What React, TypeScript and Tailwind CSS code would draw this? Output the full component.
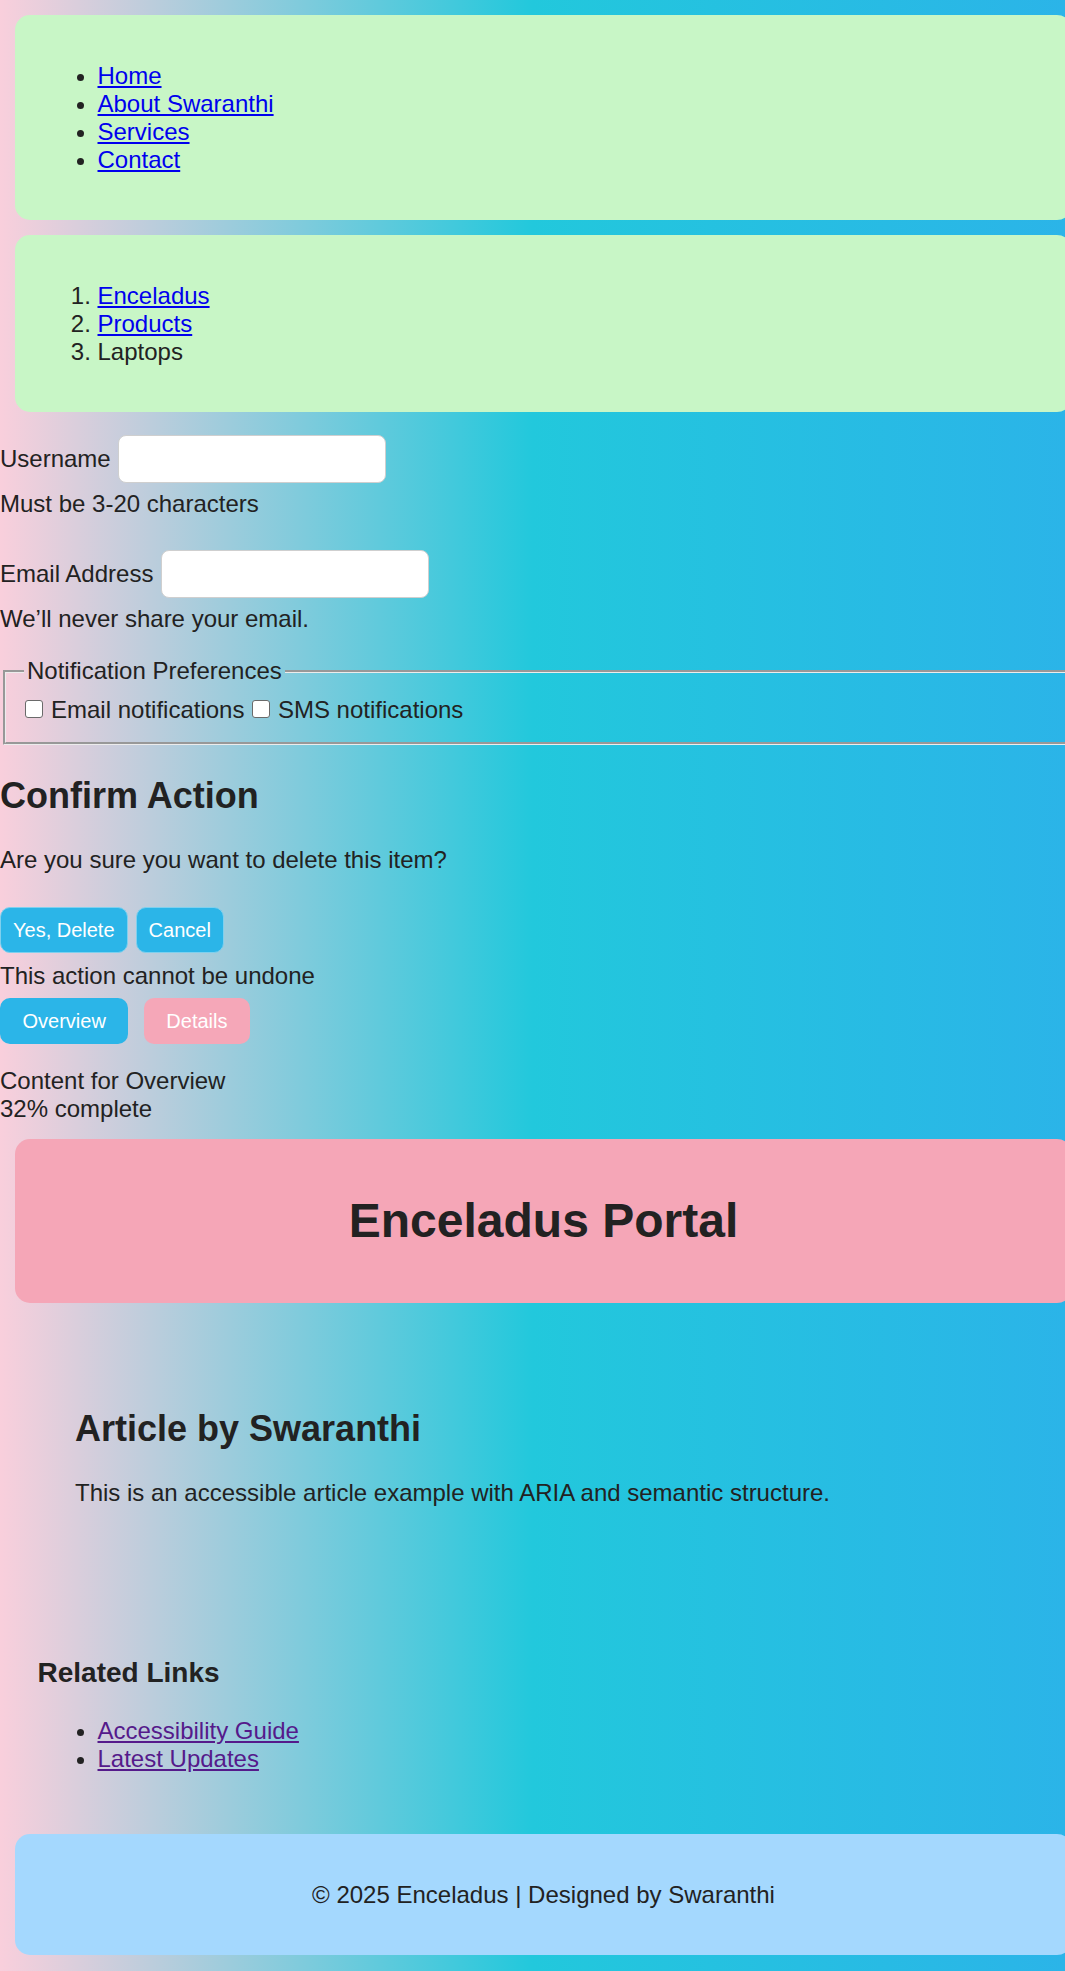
// Enceladus portal page, laid out at the screenshot's 1.5x scale
export default function App() {
  return (
    <div className="min-h-screen w-full overflow-hidden bg-[linear-gradient(to_right,#f9cfdc,#22c8dc_50%,#2bb4e8)] font-['Liberation_Sans',Arial,sans-serif] text-[24px] leading-[28px] text-[#222]">
      <div className="w-[1072px] pt-[15px] pb-[15px]">
        {/* main navigation */}
        <nav className="ml-[15px] rounded-[15px] bg-[#c8f6c6] p-[22.5px]">
          <ul className="my-[24px] list-disc pl-[60px]">
            <li>
              <a href="#" className="text-[#0000ee] underline">Home</a>
            </li>
            <li>
              <a href="#" className="text-[#0000ee] underline">About Swaranthi</a>
            </li>
            <li>
              <a href="#" className="text-[#0000ee] underline">Services</a>
            </li>
            <li>
              <a href="#" className="text-[#0000ee] underline">Contact</a>
            </li>
          </ul>
        </nav>

        {/* breadcrumb */}
        <nav className="mt-[15px] ml-[15px] rounded-[15px] bg-[#c8f6c6] p-[22.5px]">
          <ol className="my-[24px] list-decimal pl-[60px]">
            <li>
              <a href="#" className="text-[#0000ee] underline">Enceladus</a>
            </li>
            <li>
              <a href="#" className="text-[#0000ee] underline">Products</a>
            </li>
            <li>Laptops</li>
          </ol>
        </nav>

        <form className="mt-[15px]">
          <div className="mb-[24px]">
            <div className="flex items-center">
              <label htmlFor="username">Username</label>
              <input
                id="username"
                type="text"
                className="my-[7.5px] ml-[7.5px] h-[48px] w-[268px] rounded-[8px] border-[1.5px] border-[#cfcfcf] bg-white"
              />
            </div>
            <small className="block text-[24px]">Must be 3-20 characters</small>
          </div>
          <div className="mb-[24px]">
            <div className="flex items-center">
              <label htmlFor="email">Email Address</label>
              <input
                id="email"
                type="email"
                className="my-[7.5px] ml-[7.5px] h-[48px] w-[268px] rounded-[8px] border-[1.5px] border-[#cfcfcf] bg-white"
              />
            </div>
            <small className="block text-[24px]">We’ll never share your email.</small>
          </div>

          <fieldset className="mx-[3px] border-[3px] border-[#ececec] [border-style:groove] px-[18px] pt-[11px] pb-[18px]">
            <legend className="px-[3px]">Notification Preferences</legend>
            <div>
              <label>
                <input
                  type="checkbox"
                  className="mr-[8px] ml-[1px] inline-block h-[18px] w-[18px] appearance-none rounded-[3px] border-[1.5px] border-[#6a6a6a] bg-white"
                />
                Email notifications
              </label>
              <label className="ml-[8px]">
                <input
                  type="checkbox"
                  className="mr-[7.5px] inline-block h-[18px] w-[18px] appearance-none rounded-[3px] border-[1.5px] border-[#6a6a6a] bg-white"
                />
                SMS notifications
              </label>
            </div>
          </fieldset>
        </form>

        {/* confirm dialog */}
        <div role="dialog">
          <h2 className="my-[30px] text-[36px] leading-[41.4px] font-bold">Confirm Action</h2>
          <p className="mb-[24px]">Are you sure you want to delete this item?</p>
          <div className="flex gap-[8px] py-[8.7px]">
            <button className="h-[46px] rounded-[10px] border-[1.5px] border-[#7fd0ee] bg-[#2bb5e8] px-[12px] text-[20px] leading-[23px] text-white">
              Yes, Delete
            </button>
            <button className="h-[46px] rounded-[10px] border-[1.5px] border-[#7fd0ee] bg-[#2bb5e8] px-[12px] text-[20px] leading-[23px] text-white">
              Cancel
            </button>
          </div>
          <p>This action cannot be undone</p>
        </div>

        {/* tabs */}
        <div className="mt-[8.7px] flex gap-[15.5px]">
          <button className="h-[46px] rounded-[10px] bg-[#2bb5e8] px-[22.5px] text-[20px] leading-[23px] text-white">
            Overview
          </button>
          <button className="h-[46px] rounded-[10px] bg-[#f5a7b8] px-[22.5px] text-[20px] leading-[23px] text-white">
            Details
          </button>
        </div>
        <div className="mt-[23px]">Content for Overview</div>
        <div>32% complete</div>

        <header className="mt-[15.5px] ml-[15px] rounded-[15px] bg-[#f5a6b7] p-[22.5px] text-center">
          <h1 className="my-[32px] text-[48px] leading-[55px] font-bold">Enceladus Portal</h1>
        </header>

        <article className="mx-[15px] mt-[15px] p-[60px]">
          <h2 className="mt-[30px] mb-[30px] text-[36px] leading-[41.4px] font-bold">
            Article by Swaranthi
          </h2>
          <p className="mb-[24px]">
            This is an accessible article example with ARIA and semantic structure.
          </p>
        </article>

        <aside className="mx-[15px] mt-[15px] p-[22.5px]">
          <h3 className="my-[28px] text-[28px] leading-[32px] font-bold">Related Links</h3>
          <ul className="mb-[24px] list-disc pl-[60px]">
            <li>
              <a href="#" className="text-[#551a8b] underline">Accessibility Guide</a>
            </li>
            <li>
              <a href="#" className="text-[#551a8b] underline">Latest Updates</a>
            </li>
          </ul>
        </aside>

        <footer className="mt-[15px] ml-[15px] rounded-[15px] bg-[#a4d8fe] p-[22.5px] text-center">
          <p className="my-[24px]">© 2025 Enceladus | Designed by Swaranthi</p>
        </footer>
      </div>
    </div>
  );
}
